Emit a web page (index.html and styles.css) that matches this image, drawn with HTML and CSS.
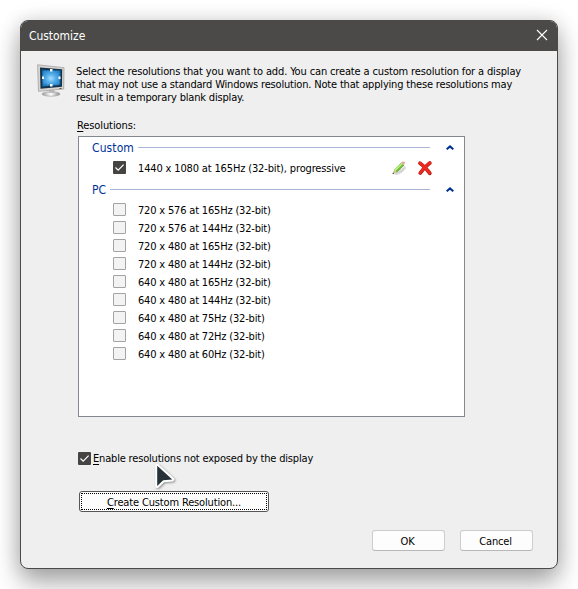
FILE: index.html
```html
<!DOCTYPE html>
<html lang="en">
<head>
<meta charset="utf-8">
<title>Customize</title>
<link rel="stylesheet" href="styles.css">
</head>
<body>
<main class="dialog">
  <header class="titlebar">
    <h1 class="title">Customize</h1>
    <svg class="close" width="12" height="12" viewBox="0 0 12 12"><path d="M1 1L11 11M11 1L1 11" stroke="#fff" stroke-width="1.1" fill="none"/></svg>
  </header>
  <section class="intro">
    <svg class="monitor" width="28" height="34" viewBox="0 0 28 34">
      <defs>
        <radialGradient id="screen" cx=".48" cy=".52" r=".65"><stop offset="0" stop-color="#a5dcff"/><stop offset=".4" stop-color="#55aeea"/><stop offset="1" stop-color="#1c78bf"/></radialGradient>
        <linearGradient id="foot" x2="1"><stop offset="0" stop-color="#999"/><stop offset=".5" stop-color="#fff"/><stop offset="1" stop-color="#888"/></linearGradient>
      </defs>
      <ellipse cx="14" cy="30" rx="9" ry="2.2" fill="url(#foot)" stroke="#999" stroke-width=".6"/>
      <path d="M12 25h5l1 4h-6z" fill="#bbb"/>
      <path d="M.6.8L27 3.7 26.7 25 1.5 27.3z" fill="#d8d5d0" stroke="#a5a29f" stroke-width=".8"/>
      <path d="M3 3.4L25.2 5.2 25 22.7 3.5 24.8z" fill="#12334b"/>
      <path d="M5 5.8L23.5 6.5 23.2 21 5.3 22.4z" fill="url(#screen)"/>
      <path d="M5.5 6.5h17.5v14.7H5.7z" fill="none" stroke="#0c4f85" stroke-width=".7" stroke-dasharray="2 1"/>
      <path d="M13 5h2.5v2.5H13zM13 20h2.5v2.5H13zM5 12.5h2V15H5zM21.5 12.5h2V15h-2z" fill="#fff"/>
      <path d="M22.5 24h2v1h-2z" fill="#555"/>
    </svg>
    <p class="copy"><span class="l1">Select the resolutions that you want to add. You can create a custom resolution for a display</span><span class="l2">that may not use a standard Windows resolution. Note that applying these resolutions may</span><span class="l3">result in a temporary blank display.</span></p>
  </section>
  <section class="content">
    <div class="label"><u>R</u>esolutions:</div>
    <div class="list">
      <div class="group custom"><span>Custom</span><i></i><svg width="8" height="5" viewBox="0 0 8 5"><path d="M.7 4.3L4 1.4 7.3 4.3" stroke="#003296" stroke-width="2" fill="none"/></svg></div>
      <div class="row first"><svg class="check" viewBox="0 0 13 13"><path d="M2.5 6.5L5.2 9.1 10.6 3.7"/></svg><span class="mode">1440 x 1080 at 165Hz (32-bit), progressive</span>
        <span class="actions">
          <svg width="16" height="16" viewBox="0 0 16 16"><path d="M3 14L14 6 15 8Q11 14 5 15z" fill="#bbb" opacity=".6"/><path d="M3 10L10 2.8 13 5.2 5.5 12.5z" fill="#75c934"/><path d="M4 10.5L11 3.6" stroke="#c9f399" stroke-width="1.2"/><path d="M5.6 12L13 5" stroke="#398217" stroke-width=".6"/><path d="M10 2.8L11.5 1.5 14.2 2 13 5.2z" fill="#e7a8a0"/><path d="M3 10L1.6 14 5.5 12.5z" fill="#d4bd86"/><path d="M2 12.6L1.5 14.2 3.2 13.5z" fill="#333"/></svg>
          <svg width="16" height="16" viewBox="0 0 16 16"><path d="M3 3.3Q7 6 12.8 13.2M12.8 3Q8 6.5 3.3 13" stroke="#b81b16" stroke-width="3.8" stroke-linecap="round" fill="none"/><path d="M3 3Q7 6 12.6 12.8M12.8 2.8Q8 6.5 3.2 12.8" stroke="#ee2a20" stroke-width="2.6" stroke-linecap="round" fill="none"/></svg>
        </span></div>
      <div class="group pc"><span>PC</span><i></i><svg width="8" height="5" viewBox="0 0 8 5"><path d="M.7 4.3L4 1.4 7.3 4.3" stroke="#003296" stroke-width="2" fill="none"/></svg></div>
      <div class="row"><b class="box"></b><span class="mode">720 x 576 at 165Hz (32-bit)</span></div>
      <div class="row"><b class="box"></b><span class="mode">720 x 576 at 144Hz (32-bit)</span></div>
      <div class="row"><b class="box"></b><span class="mode">720 x 480 at 165Hz (32-bit)</span></div>
      <div class="row"><b class="box"></b><span class="mode">720 x 480 at 144Hz (32-bit)</span></div>
      <div class="row"><b class="box"></b><span class="mode">640 x 480 at 165Hz (32-bit)</span></div>
      <div class="row"><b class="box"></b><span class="mode">640 x 480 at 144Hz (32-bit)</span></div>
      <div class="row"><b class="box"></b><span class="mode">640 x 480 at 75Hz (32-bit)</span></div>
      <div class="row"><b class="box"></b><span class="mode">640 x 480 at 72Hz (32-bit)</span></div>
      <div class="row"><b class="box"></b><span class="mode">640 x 480 at 60Hz (32-bit)</span></div>
    </div>
    <div class="enable"><svg class="check" viewBox="0 0 13 13"><path d="M2.5 6.5L5.2 9.1 10.6 3.7"/></svg><span><u>E</u>nable resolutions not exposed by the display</span></div>
    <button class="create"><span class="focus"><span class="create-text"><u>C</u>reate Custom Resolution...</span></span></button>
  </section>
  <footer class="buttons"><button class="btn"><span>OK</span></button><button class="btn cancel"><span>Cancel</span></button></footer>
</main>
<svg class="cursor" width="24" height="30" viewBox="0 0 24 30"><path d="M3.2 2.8L18.3 16.4 9.2 17.3 3.2 23z" fill="#263238" stroke="#fff" stroke-width="4" stroke-linejoin="round" paint-order="stroke"/></svg>
</body>
</html>
```
FILE: styles.css
```css
* { box-sizing: border-box; }
body {
  margin: 0;
  padding: 20px;
  height: 589px;
  overflow: hidden;
  background: #fff;
  font: 11px/13px "DejaVu Sans Condensed", "DejaVu Sans", sans-serif;
  font-stretch: condensed;
  letter-spacing: -.18px;
  color: #000;
}
.dialog {
  width: 538px;
  height: 549px;
  border: 1px solid #4b4a48;
  border-radius: 8px;
  overflow: hidden;
  background: #efefef;
  box-shadow: 0 14px 26px rgba(0,0,0,.32), 0 0 20px rgba(0,0,0,.14);
}
.titlebar {
  height: 30px;
  padding: 0 9px 0 8px;
  display: flex;
  align-items: center;
  justify-content: space-between;
  background: #4b4a48;
}
.close { margin-bottom: 2px; }
.title { margin: 0; font-size: 12px; font-weight: 400; letter-spacing: -.05px; color: #fff; }
.intro { display: flex; height: 67px; padding: 13px 0 0 16px; }
.copy { margin: 1px 0 0 11px; }
.copy span { display: block; white-space: nowrap; }
.copy .l1 { letter-spacing: -.14px; }
.content { padding-left: 57px; }
.label { height: 18px; padding-top: 1px; margin-left: -1px; letter-spacing: -.1px; }
u { text-underline-offset: 2px; text-decoration-thickness: 1px; }
.list { width: 387px; height: 281px; border: 1px solid #828790; background: #fff; }
.group {
  display: flex;
  align-items: center;
  height: 20px;
  padding: 0 10px 0 13px;
  color: #003296;
  font-size: 12px;
  letter-spacing: .1px;
}
.group span { padding-top: 2px; }
.group i { flex: 1; height: 1px; margin: 0 16px 0 4px; background: #aab5d5; }
.row { display: flex; align-items: center; height: 18px; padding-left: 34px; }
.row.first { height: 21px; }
.group.pc { height: 22px; }
.box, .check { width: 13px; height: 13px; flex: none; }
.box { border: 1px solid #a3a3a3; border-radius: 1px; background: #f3f3f3; }
.check { border-radius: 1px; background: #454442; }
.check path { fill: none; stroke: #fff; stroke-width: 1.2; }
.mode { margin-left: 12px; padding-top: 2px; white-space: nowrap; }
.first .mode { letter-spacing: -.15px; }
.actions { display: flex; gap: 10px; margin-left: auto; padding-right: 31px; }
.enable { display: flex; align-items: center; height: 15px; margin-top: 34px; }
.enable span { margin-left: 2px; }
button { padding: 0; font: inherit; letter-spacing: inherit; color: #000; background: #fdfdfd; }
.create { display: block; width: 190px; height: 21px; margin: 25px 0 0 1px; padding: 1px; border: 1px solid #555; border-radius: 3px; }
.focus { display: flex; align-items: center; justify-content: center; height: 17px; border: 1px dotted #000; }
.create-text { margin-top: 1px; letter-spacing: -.15px; }
.buttons { display: flex; gap: 15px; margin: 18px 0 0 351px; }
.btn { width: 73px; height: 21px; padding: 1px 2px 0 0; border: 1px solid #ccc; border-bottom-color: #b8b8b8; border-radius: 3px; }
.cursor { position: absolute; left: 154px; top: 463px; filter: drop-shadow(1px 1px 1px rgba(0,0,0,.4)); }
```
